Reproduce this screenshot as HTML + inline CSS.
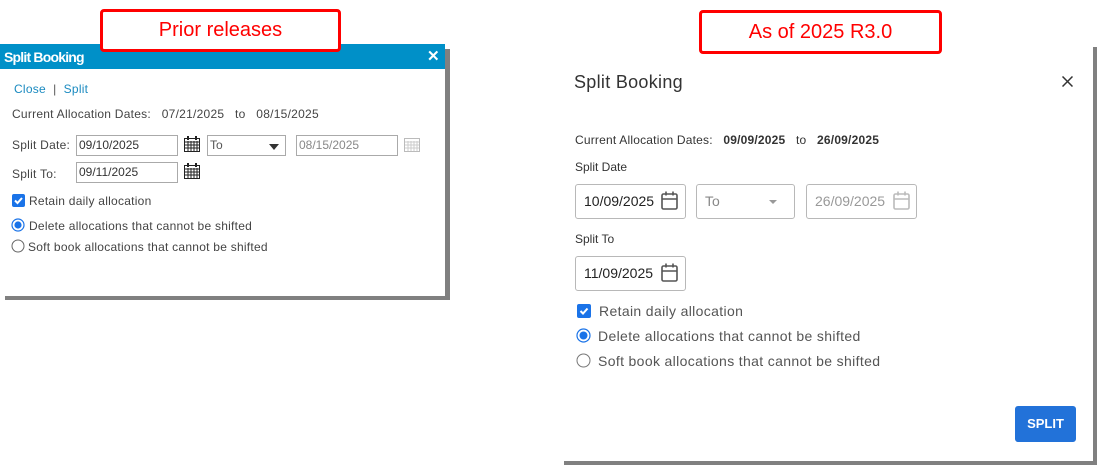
<!DOCTYPE html>
<html><head><meta charset="utf-8"><style>
*{margin:0;padding:0;box-sizing:border-box}
body{width:1100px;height:471px;background:#fff;position:relative;overflow:hidden;font-family:"Liberation Sans",sans-serif;color:#333}
.a{position:absolute;white-space:nowrap}
.red{position:absolute;border:3px solid #f00;border-radius:4px;color:#f00;font-size:20px;text-align:center;background:#fff}
.l{font-size:12px;color:#444;letter-spacing:0.25px}
.inp{position:absolute;border:1px solid #aaa;font-size:12px;color:#333;padding:2px 2px;height:21px;background:#fff}
.ni{position:absolute;border:1px solid #b8b8b8;border-radius:3px;height:35px;font-size:14px;color:#222;padding:8px 8px;background:#fff}
.r{font-size:14px;color:#555;letter-spacing:0.35px}
</style></head><body>
<!-- left dialog -->
<div class="a" style="left:5px;top:49px;width:445px;height:251px;background:#808080"></div>
<div class="a" style="left:0;top:44px;width:445px;height:252px;background:#fff"></div>
<div class="a" style="left:0;top:44px;width:445px;height:25px;background:#0090c8"></div>
<div class="a" style="left:4px;top:49px;color:#fff;font-weight:bold;font-size:14px;letter-spacing:-0.8px">Split Booking</div>
<div class="a" style="left:427px;top:47px;color:#fff;font-weight:bold;font-size:15px">✕</div>
<div class="a l" style="left:14px;top:82px;color:#1a8ac0">Close <span style="color:#555">&nbsp;|&nbsp;</span> Split</div>
<div class="a l" style="left:12px;top:107px">Current Allocation Dates:&nbsp;&nbsp; 07/21/2025 &nbsp;&nbsp;to&nbsp;&nbsp; 08/15/2025</div>
<div class="a l" style="left:12px;top:138px">Split Date:</div>
<div class="inp" style="left:76px;top:135px;width:102px">09/10/2025</div>
<svg class="a" style="left:184px;top:136px" width="17" height="17"><rect x="0.5" y="2.5" width="15" height="13" fill="none" stroke="#222"/><path d="M1 6h14M1 9h14M1 12h14M4 5v10M7 5v10M10 5v10M13 5v10" stroke="#222"/><rect x="3" y="0" width="2" height="4" fill="#222"/><rect x="11" y="0" width="2" height="4" fill="#222"/></svg>
<div class="inp" style="left:207px;top:135px;width:79px;color:#555">To<span style="position:absolute;right:6px;top:8px;border:5px solid transparent;border-top:6px solid #333;border-bottom:0"></span></div>
<div class="inp" style="left:296px;top:135px;width:102px;color:#888">08/15/2025</div>
<svg class="a" style="left:404px;top:136px" width="17" height="17"><rect x="0.5" y="2.5" width="15" height="13" fill="none" stroke="#bbb"/><path d="M1 6h14M1 9h14M1 12h14M4 5v10M7 5v10M10 5v10M13 5v10" stroke="#ccc"/></svg>
<div class="a l" style="left:12px;top:167px">Split To:</div>
<div class="inp" style="left:76px;top:162px;width:102px">09/11/2025</div>
<svg class="a" style="left:184px;top:163px" width="17" height="17"><rect x="0.5" y="2.5" width="15" height="13" fill="none" stroke="#222"/><path d="M1 6h14M1 9h14M1 12h14M4 5v10M7 5v10M10 5v10M13 5v10" stroke="#222"/><rect x="3" y="0" width="2" height="4" fill="#222"/><rect x="11" y="0" width="2" height="4" fill="#222"/></svg>
<svg class="a" style="left:12px;top:194px" width="13" height="13"><rect width="13" height="13" rx="2" fill="#1a73e8"/><path d="M3 6.5l2.5 2.5 4.5-5" stroke="#fff" stroke-width="2" fill="none"/></svg>
<div class="a l" style="left:29px;top:194px">Retain daily allocation</div>
<svg class="a" style="left:11px;top:218px" width="14" height="14"><circle cx="7" cy="7" r="6" fill="#fff" stroke="#1a73e8" stroke-width="1.2"/><circle cx="7" cy="7" r="3.6" fill="#1a73e8"/></svg>
<div class="a l" style="left:29px;top:219px">Delete allocations that cannot be shifted</div>
<svg class="a" style="left:11px;top:239px" width="14" height="14"><circle cx="7" cy="7" r="6" fill="#fff" stroke="#666"/></svg>
<div class="a l" style="left:28px;top:240px">Soft book allocations that cannot be shifted</div>
<div class="red" style="left:100px;top:9px;width:241px;height:43px;line-height:37px">Prior releases</div>

<!-- right dialog -->
<div class="a" style="left:564px;top:47px;width:533px;height:418px;background:#808080"></div>
<div class="a" style="left:560px;top:40px;width:533px;height:421px;background:#fff"></div>
<div class="a" style="left:574px;top:72px;font-size:18px;color:#333;letter-spacing:0.3px">Split Booking</div>
<svg class="a" style="left:1062px;top:76px" width="11" height="11"><path d="M0.5 0.5l10 10M10.5 0.5l-10 10" stroke="#333" stroke-width="1.5"/></svg>
<div class="a" style="left:575px;top:133px;font-size:12px;color:#333;letter-spacing:0.2px">Current Allocation Dates:&nbsp;&nbsp; <b>09/09/2025</b> &nbsp;&nbsp;to&nbsp;&nbsp; <b>26/09/2025</b></div>
<div class="a" style="left:575px;top:160px;font-size:12px;color:#333">Split Date</div>
<div class="ni" style="left:575px;top:184px;width:111px">10/09/2025</div>
<svg class="a" style="left:661px;top:191px" width="18" height="20"><rect x="1" y="3" width="15" height="15" rx="1.5" fill="none" stroke="#555" stroke-width="1.6"/><path d="M1 8h15M5 0.5v4M12 0.5v4" stroke="#555" stroke-width="1.6"/></svg>
<div class="ni" style="left:696px;top:184px;width:99px;color:#888">To<span style="position:absolute;right:17px;top:15px;border:4px solid transparent;border-top:4px solid #999;border-bottom:0"></span></div>
<div class="ni" style="left:806px;top:184px;width:111px;color:#999">26/09/2025</div>
<svg class="a" style="left:893px;top:191px" width="18" height="20"><rect x="1" y="3" width="15" height="15" rx="1.5" fill="none" stroke="#bbb" stroke-width="1.6"/><path d="M1 8h15M5 0.5v4M12 0.5v4" stroke="#bbb" stroke-width="1.6"/></svg>
<div class="a" style="left:575px;top:232px;font-size:12px;color:#333">Split To</div>
<div class="ni" style="left:575px;top:256px;width:111px">11/09/2025</div>
<svg class="a" style="left:661px;top:263px" width="18" height="20"><rect x="1" y="3" width="15" height="15" rx="1.5" fill="none" stroke="#555" stroke-width="1.6"/><path d="M1 8h15M5 0.5v4M12 0.5v4" stroke="#555" stroke-width="1.6"/></svg>
<svg class="a" style="left:577px;top:304px" width="14" height="14"><rect width="14" height="14" rx="2" fill="#1a73e8"/><path d="M3.5 7l2.5 2.5 4.5-5" stroke="#fff" stroke-width="2" fill="none"/></svg>
<div class="a r" style="left:599px;top:303px">Retain daily allocation</div>
<svg class="a" style="left:576px;top:328px" width="15" height="15"><circle cx="7.5" cy="7.5" r="6.5" fill="#fff" stroke="#1a73e8" stroke-width="1.2"/><circle cx="7.5" cy="7.5" r="4" fill="#1a73e8"/></svg>
<div class="a r" style="left:598px;top:328px">Delete allocations that cannot be shifted</div>
<svg class="a" style="left:576px;top:353px" width="15" height="15"><circle cx="7.5" cy="7.5" r="6.5" fill="#fff" stroke="#777"/></svg>
<div class="a r" style="left:598px;top:353px">Soft book allocations that cannot be shifted</div>
<div class="a" style="left:1015px;top:406px;width:61px;height:36px;background:#2272d9;border-radius:3px;color:#fff;font-size:13px;font-weight:bold;text-align:center;line-height:36px">SPLIT</div>
<div class="red" style="left:699px;top:10px;width:243px;height:44px;line-height:38px">As of 2025 R3.0</div>
</body></html>
